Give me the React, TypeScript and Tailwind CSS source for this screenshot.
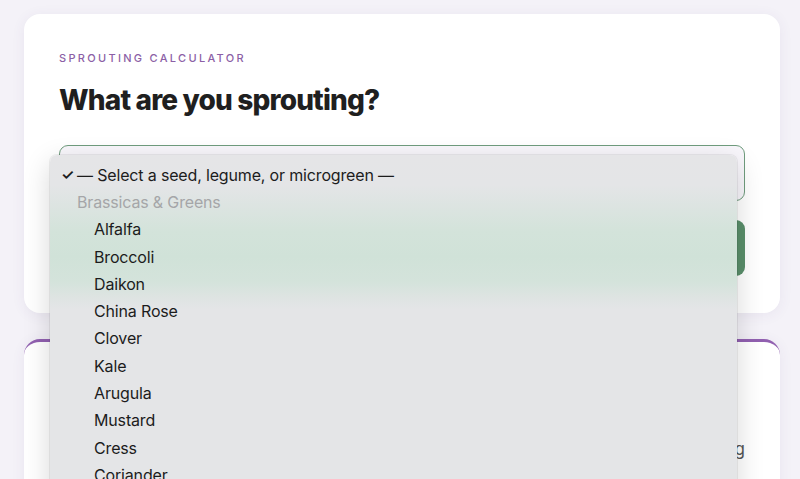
import React from "react";

const items = [
  "Alfalfa",
  "Broccoli",
  "Daikon",
  "China Rose",
  "Clover",
  "Kale",
  "Arugula",
  "Mustard",
  "Cress",
  "Coriander",
  "Fenugreek",
];

export default function App() {
  return (
    <div className="relative min-h-screen overflow-hidden bg-[#f4f2f8] pl-[24px] pr-[20px] pt-[14px] pb-10 [font-family:Inter,'Noto_Sans',sans-serif]">
      <div className="rounded-[16px] bg-white px-[35px] pt-[37px] pb-[37px] shadow-[0_2px_14px_rgba(90,60,130,0.07)]">
        <div className="text-[11px] font-medium leading-[14px] tracking-[0.21em] text-[#8c5fa6]">
          SPROUTING CALCULATOR
        </div>
        <h1 className="mt-[17px] text-[28px] font-extrabold leading-[36px] tracking-[-0.03em] text-[#1f1f1f]">
          What are you sprouting?
        </h1>
        <div className="mt-[27px] flex h-[56px] items-center rounded-[9px] border border-[#6f9c7d] bg-[#f8f6fb] px-4 text-[16px] text-[#333]">
          — Select a seed, legume, or microgreen —
        </div>
        <button className="mt-[19px] flex h-[56px] w-full items-center justify-center rounded-[9px] bg-[#5a8f6b] text-[16px] font-semibold text-white">
          Calculate
        </button>
      </div>

      <div className="mt-[26px] rounded-t-[16px] border-t-[3px] border-[#9160b0] bg-white px-[35px] pt-[26px] pb-10 shadow-[0_2px_14px_rgba(90,60,130,0.07)]">
        <div className="text-[11px] font-medium tracking-[0.21em] text-[#8c5fa6]">YOUR PLAN</div>
        <div className="mt-2 text-[20px] font-bold text-[#1f1f1f]">Sprouting schedule</div>
        <div className="mt-[14px] flex items-center justify-between text-[17px] text-[#555]">
          <span>Seed amount</span>
          <span>30 g</span>
        </div>
      </div>

      <div className="absolute left-[50px] top-[155px] h-[360px] w-[687px] rounded-t-[7px] bg-[linear-gradient(to_bottom,#e5e5e7_0px,#e4e5e7_30px,#dce4e1_52px,#d3e3da_77px,#d0e2d8_102px,#d4e3db_127px,#dfe4e3_144px,#e4e5e7_154px,#e4e5e7_100%)] pt-[6px] shadow-[0_8px_28px_rgba(0,0,0,0.16),0_0_0_1px_rgba(0,0,0,0.06)]">
        <div className="flex h-[27.3px] items-center pl-[11px] text-[16px] leading-none tracking-[-0.01em] text-[#1c1c1c]">
          <span className="w-[16px] text-[15px] font-semibold">✓</span>
          <span>— Select a seed, legume, or microgreen —</span>
        </div>
        <div className="flex h-[27.3px] items-center pl-[27px] text-[16px] leading-none tracking-[-0.01em] text-[#a5a6a8]">
          Brassicas &amp; Greens
        </div>
        {items.map((it) => (
          <div
            key={it}
            className="flex h-[27.3px] items-center pl-[44px] text-[16px] leading-none tracking-[-0.01em] text-[#1c1c1c]"
          >
            {it}
          </div>
        ))}
      </div>
    </div>
  );
}
